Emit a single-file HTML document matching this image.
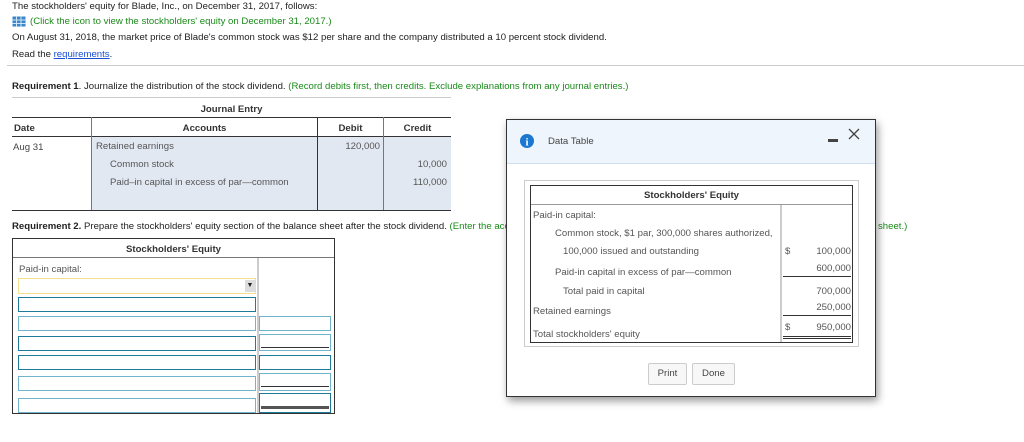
<!DOCTYPE html>
<html><head><style>
body{margin:0;width:1024px;height:442px;background:#fff;font-family:"Liberation Sans",Arial,sans-serif;font-size:9.6px;color:#222;position:relative;overflow:hidden}
.a{position:absolute;white-space:nowrap}
.g{color:#1a8a1a}
.b{font-weight:bold}
.inp{position:absolute;box-sizing:border-box;border:1px solid #6fb4c8;background:#fff}
.dk{border-color:#1e7a96}
.ln{position:absolute;background:#333}
</style></head><body>
<div class="a" style="left:12px;top:1px">The stockholders' equity for Blade, Inc., on December 31, 2017, follows:</div>
<svg class="a" style="left:12px;top:16px" width="14" height="11"><rect x="0.5" y="0.5" width="13" height="10" fill="#3a86c8"/><g stroke="#cfe6f8" stroke-width="1"><line x1="0" y1="4" x2="14" y2="4"/><line x1="0" y1="7.5" x2="14" y2="7.5"/><line x1="4.5" y1="0" x2="4.5" y2="11"/><line x1="9" y1="0" x2="9" y2="11"/></g></svg>
<div class="a g" style="left:30px;top:16px">(Click the icon to view the stockholders' equity on December 31, 2017.)</div>
<div class="a" style="left:12px;top:32px">On August 31, 2018, the market price of Blade's common stock was $12 per share and the company distributed a 10 percent stock dividend.</div>
<div class="a" style="left:12px;top:49px">Read the <span style="color:#1a4fd6;text-decoration:underline">requirements</span>.</div>
<div class="a" style="left:7px;top:65px;width:1017px;height:1px;background:#ccc"></div>
<div class="a" style="left:12px;top:81px"><span class="b">Requirement 1</span>. Journalize the distribution of the stock dividend. <span class="g">(Record debits first, then credits. Exclude explanations from any journal entries.)</span></div>
<div class="a" style="left:12px;top:97px;width:439px;height:1px;background:#ccc"></div>
<div class="a b" style="left:12px;width:439px;top:104px;text-align:center;color:#333">Journal Entry</div>
<div class="a" style="left:92px;top:137px;width:359px;height:73px;background:#e2e8f2"></div>
<div class="ln" style="left:12px;top:117px;width:439px;height:1px"></div>
<div class="ln" style="left:12px;top:136px;width:439px;height:1px"></div>
<div class="ln" style="left:12px;top:210px;width:439px;height:1px"></div>
<div class="ln" style="left:91px;top:117px;width:1px;height:93px;background:#777"></div>
<div class="ln" style="left:317px;top:117px;width:1px;height:93px"></div>
<div class="ln" style="left:383px;top:117px;width:1px;height:93px;background:#777"></div>
<div class="a b" style="left:14px;top:123px;color:#333">Date</div>
<div class="a b" style="left:92px;width:225px;top:123px;text-align:center;color:#333">Accounts</div>
<div class="a b" style="left:318px;width:65px;top:123px;text-align:center;color:#333">Debit</div>
<div class="a b" style="left:384px;width:67px;top:123px;text-align:center;color:#333">Credit</div>
<div class="a" style="left:13px;top:142px;color:#444">Aug 31</div>
<div class="a" style="left:96px;top:141px;color:#555">Retained earnings</div>
<div class="a" style="left:110px;top:159px;color:#555">Common stock</div>
<div class="a" style="left:110px;top:177px;color:#555">Paid–in capital in excess of par—common</div>
<div class="a" style="left:318px;width:62px;top:141px;text-align:right;color:#555">120,000</div>
<div class="a" style="left:384px;width:63px;top:159px;text-align:right;color:#555">10,000</div>
<div class="a" style="left:384px;width:63px;top:177px;text-align:right;color:#555">110,000</div>
<div class="a" style="left:12px;top:221px"><span class="b">Requirement 2.</span> Prepare the stockholders' equity section of the balance sheet after the stock dividend. <span class="g">(Enter the accounts and amounts in order as they appear on the balance sheet.)</span></div>
<div class="a" style="left:12px;top:238px;width:323px;height:176px;box-sizing:border-box;border:1px solid #333;background:#fff"></div>
<div class="a b" style="left:12px;width:323px;top:244px;text-align:center;color:#333">Stockholders' Equity</div>
<div class="a" style="left:13px;top:257px;width:321px;height:1px;background:#777"></div>
<div class="a" style="left:257px;top:258px;width:2px;height:155px;background:#ccc"></div>
<div class="a" style="left:19px;top:264px;color:#555">Paid-in capital:</div>
<div class="inp" style="left:18px;top:278px;width:238px;height:16px;border-color:#f5e08a"></div>
<div class="a" style="left:245px;top:280px;width:10px;height:12px;background:#ddd;font-size:7px;text-align:center;line-height:12px">▼</div>
<div class="inp dk" style="left:18px;top:297px;width:238px;height:15px"></div>
<div class="inp" style="left:18px;top:316px;width:238px;height:15px"></div>
<div class="inp dk" style="left:18px;top:336px;width:238px;height:15px"></div>
<div class="inp dk" style="left:18px;top:355px;width:238px;height:15px"></div>
<div class="inp" style="left:18px;top:376px;width:238px;height:15px"></div>
<div class="inp" style="left:18px;top:398px;width:238px;height:15px"></div>
<div class="inp" style="left:259px;top:316px;width:72px;height:15px"></div>
<div class="inp" style="left:259px;top:334px;width:72px;height:17px"></div>
<div class="ln" style="left:261px;top:347px;width:68px;height:1px"></div>
<div class="inp dk" style="left:259px;top:355px;width:72px;height:15px"></div>
<div class="inp" style="left:259px;top:373px;width:72px;height:18px"></div>
<div class="ln" style="left:261px;top:386px;width:68px;height:1px"></div>
<div class="inp dk" style="left:259px;top:393px;width:72px;height:20px"></div>
<div class="ln" style="left:261px;top:406px;width:68px;height:3px;background:#555"></div>
<div class="a g" style="left:878px;top:221px">sheet.)</div>
<div class="a" style="left:506px;top:119px;width:370px;height:278px;box-sizing:border-box;border:1px solid #333;background:#fff;box-shadow:2px 4px 8px rgba(0,0,0,0.4)"></div>
<div class="a" style="left:507px;top:120px;width:368px;height:43px;background:#eff5fc;border-bottom:1px solid #cfe0ef"></div>
<svg class="a" style="left:520px;top:134px" width="14" height="14"><circle cx="7" cy="7" r="7" fill="#1a78d0"/><text x="7" y="11.5" fill="#fff" font-size="11" font-weight="bold" text-anchor="middle" font-family="Liberation Serif">i</text></svg>
<div class="a" style="left:548px;top:136px;color:#444">Data Table</div>
<div class="a" style="left:828px;top:139px;width:10px;height:3px;background:#444"></div>
<svg class="a" style="left:848px;top:128px" width="12" height="12"><path d="M1 1L11 11M11 1L1 11" stroke="#444" stroke-width="1.3"/></svg>
<div class="a" style="left:524px;top:180px;width:335px;height:167px;box-sizing:border-box;border:1px solid #ccc"></div>
<div class="a" style="left:530px;top:185px;width:323px;height:158px;box-sizing:border-box;border:1px solid #333"></div>
<div class="a b" style="left:530px;width:323px;top:190px;text-align:center;color:#333">Stockholders' Equity</div>
<div class="a" style="left:531px;top:204px;width:321px;height:1px;background:#999"></div>
<div class="a" style="left:780px;top:205px;width:2px;height:137px;background:#ccc"></div>
<div class="a" style="left:533px;top:210px;color:#555">Paid-in capital:</div>
<div class="a" style="left:555px;top:228px;color:#555">Common stock, $1 par, 300,000 shares authorized,</div>
<div class="a" style="left:563px;top:246px;color:#555">100,000 issued and outstanding</div>
<div class="a" style="left:555px;top:267px;color:#555">Paid-in capital in excess of par—common</div>
<div class="a" style="left:563px;top:286px;color:#555">Total paid in capital</div>
<div class="a" style="left:533px;top:306px;color:#555">Retained earnings</div>
<div class="a" style="left:533px;top:329px;color:#555">Total stockholders' equity</div>
<div class="a" style="left:785px;top:246px;color:#555">$</div>
<div class="a" style="left:785px;top:322px;color:#555">$</div>
<div class="a" style="left:790px;width:61px;top:246px;text-align:right;color:#555">100,000</div>
<div class="a" style="left:790px;width:61px;top:263px;text-align:right;color:#555">600,000</div>
<div class="a" style="left:790px;width:61px;top:286px;text-align:right;color:#555">700,000</div>
<div class="a" style="left:790px;width:61px;top:302px;text-align:right;color:#555">250,000</div>
<div class="a" style="left:790px;width:61px;top:322px;text-align:right;color:#555">950,000</div>
<div class="ln" style="left:783px;top:276px;width:68px;height:1px"></div>
<div class="ln" style="left:783px;top:315px;width:68px;height:1px"></div>
<div class="ln" style="left:783px;top:336px;width:68px;height:1px"></div>
<div class="ln" style="left:783px;top:338px;width:68px;height:1px"></div>
<div class="a" style="left:648px;top:363px;width:39px;height:22px;box-sizing:border-box;border:1px solid #ccc;border-radius:2px;background:#f7f7f7;text-align:center;line-height:20px;color:#444">Print</div>
<div class="a" style="left:692px;top:363px;width:43px;height:22px;box-sizing:border-box;border:1px solid #ccc;border-radius:2px;background:#f7f7f7;text-align:center;line-height:20px;color:#444">Done</div>
</body></html>
